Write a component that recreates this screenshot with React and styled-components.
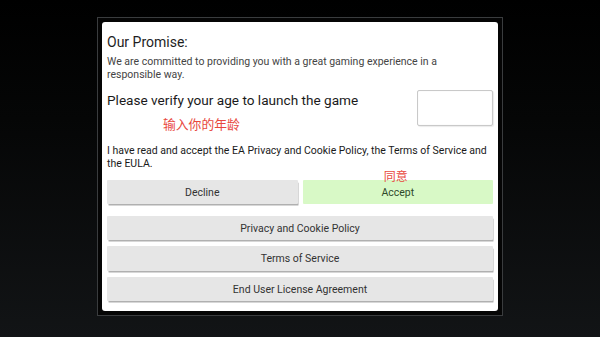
import React from "react";
import styled, { createGlobalStyle } from "styled-components";

const GlobalStyle = createGlobalStyle`
    html, body {
        margin: 0;
        padding: 0;
        background: #000;
    }
    body {
        font-family: Roboto, "Noto Sans", "Noto Sans CJK SC", sans-serif;
    }
`

const Screen = styled.div`
    width: 600px;
    height: 337px;
    box-sizing: border-box;
    padding-top: 17px;
    display: flex;
    justify-content: center;
    align-items: flex-start;
    background: linear-gradient(to bottom, #000 0%, #050606 35%, #121416 100%);
`

const Frame = styled.div`
    width: 406px;
    height: 299px;
    box-sizing: border-box;
    border: 1px solid #3a3c3e;
    background: #050505;
    padding: 4px;
`

const Panel = styled.div`
    height: 100%;
    box-sizing: border-box;
    background: #fff;
    border-radius: 3px;
    padding: 11px 5px 10px;
    display: flex;
    flex-direction: column;
    color: #222;
`

const Title = styled.h2`
    margin: 0 0 5px;
    font-size: 14px;
    font-weight: 400;
    line-height: 18px;
    color: #1e1e1e;
`

const Note = styled.p`
    margin: ${props => props.$top || 0}px 0 0;
    font-size: 10.5px;
    line-height: ${props => props.$dark ? 13.2 : 12.8}px;
    color: ${props => props.$dark ? "#1a1a1a" : "#444"};
`

const AgeRow = styled.div`
    display: flex;
    justify-content: space-between;
    align-items: flex-start;
    margin-top: 8px;
`

const AgeText = styled.div`
    display: flex;
    flex-direction: column;
    padding-top: 1px;
`

const Prompt = styled.div`
    font-size: 13.6px;
    line-height: 18px;
    color: #1a1a1a;
`

const Hint = styled.span`
    margin: 7px 0 0 56px;
    font-family: "Noto Sans CJK SC", sans-serif;
    font-size: 12.8px;
    line-height: 16px;
    color: #e8483e;
`

const AgeInput = styled.input`
    width: 76px;
    height: 36px;
    box-sizing: border-box;
    border: 1px solid #c9c9c9;
    border-radius: 2px;
    box-shadow: inset 0 0 1px rgba(0, 0, 0, 0.15), 1px 1px 1px rgba(0, 0, 0, 0.08);
    outline: none;
    background: #fff;
`

const ChoiceRow = styled.div`
    display: grid;
    grid-template-columns: 1fr 1fr;
    gap: 5px;
    margin-top: 10px;
`

const Button = styled.button`
    position: relative;
    height: ${props => props.$tall ? 25 : 24}px;
    border: none;
    border-radius: 1px;
    background: ${props => props.$accept ? "#d8f9c6" : "#e6e6e6"};
    box-shadow: ${props => props.$accept ? "none" : "1px 2px 0 -0.5px #b0b0b0"};
    font-family: Roboto, "Noto Sans", sans-serif;
    font-size: 10.5px;
    color: ${props => props.$accept ? "#2f4a2a" : "#333"};
    padding: 0;
    cursor: pointer;
`

const LinkStack = styled.div`
    display: flex;
    flex-direction: column;
    gap: 6px;
    margin-top: 12px;
`

const Badge = styled.span`
    position: absolute;
    top: -10px;
    left: 50%;
    transform: translateX(-58%);
    font-family: "Noto Sans CJK SC", sans-serif;
    font-size: 12px;
    line-height: 12px;
    color: #e8483e;
`

const App = () => {

    return(
        <Screen>
            <GlobalStyle />
            <Frame>
                <Panel>
                    <Title>Our Promise:</Title>
                    <Note>We are committed to providing you with a great gaming experience in a responsible way.</Note>
                    <AgeRow>
                        <AgeText>
                            <Prompt>Please verify your age to launch the game</Prompt>
                            <Hint>输入你的年龄</Hint>
                        </AgeText>
                        <AgeInput type="text" name="age" />
                    </AgeRow>
                    <Note $top={12} $dark>I have read and accept the EA Privacy and Cookie Policy, the Terms of Service and the EULA.</Note>
                    <ChoiceRow>
                        <Button>Decline</Button>
                        <Button $accept>
                            <Badge>同意</Badge>
                            Accept
                        </Button>
                    </ChoiceRow>
                    <LinkStack>
                        <Button>Privacy and Cookie Policy</Button>
                        <Button $tall>Terms of Service</Button>
                        <Button>End User License Agreement</Button>
                    </LinkStack>
                </Panel>
            </Frame>
        </Screen>
    )
}

export default App
